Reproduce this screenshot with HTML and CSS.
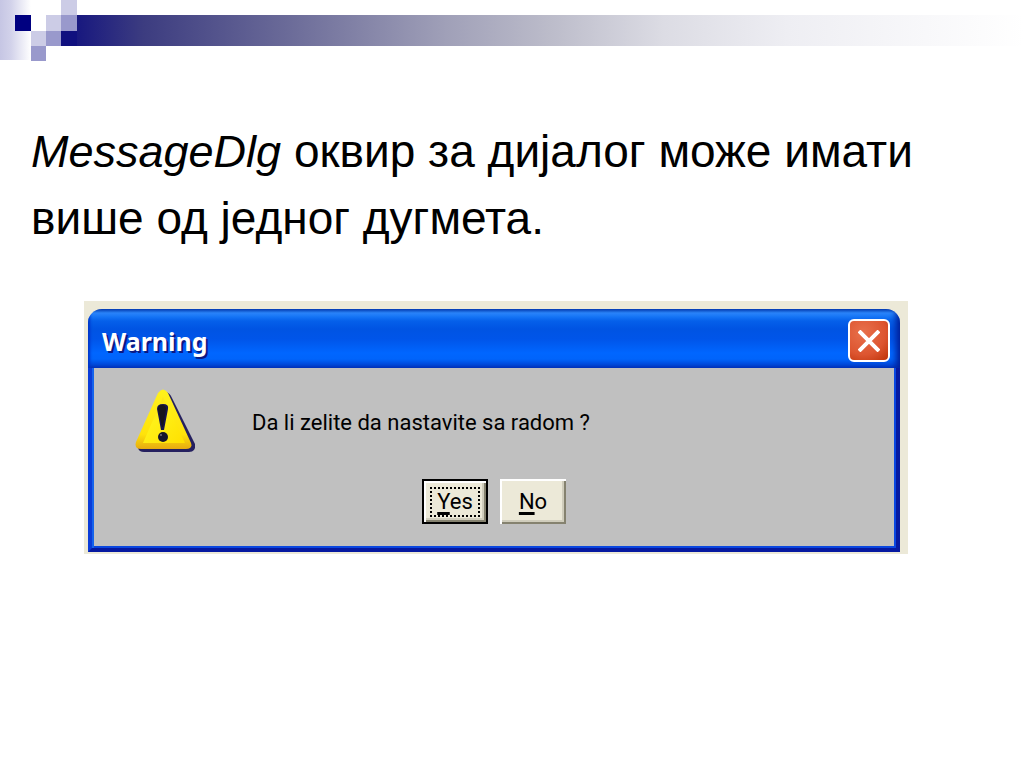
FILE: index.html
```html
<!DOCTYPE html>
<html lang="sr">
<head>
<meta charset="utf-8">
<title>MessageDlg</title>
<link rel="stylesheet" href="styles.css">
</head>
<body>
<header class="banner">
  <svg class="banner-squares" width="77" height="61" viewBox="0 0 77 61" shape-rendering="crispEdges" aria-hidden="true">
    <defs>
      <linearGradient id="fade"><stop offset="0" stop-color="#c6c6e4"/><stop offset=".35" stop-color="#d2d2ea"/><stop offset="1" stop-color="#fff"/></linearGradient>
    </defs>
    <rect width="31" height="60" fill="url(#fade)"/>
    <rect x="15" y="15" width="16" height="16" fill="#000080"/>
    <rect x="61" y="0" width="16" height="15" fill="#cccce6"/>
    <rect x="46" y="15" width="15" height="16" fill="#cccce6"/>
    <rect x="31" y="31" width="15" height="15" fill="#cccce6"/>
    <rect x="61" y="15" width="16" height="16" fill="#9999cc"/>
    <rect x="46" y="31" width="15" height="15" fill="#9999cc"/>
    <rect x="31" y="46" width="15" height="15" fill="#9999cc"/>
    <rect x="61" y="31" width="16" height="15" fill="#10107f"/>
  </svg>
  <div class="banner-bar"></div>
</header>
<main class="slide">
  <p class="lead"><em>MessageDlg</em> <span>оквир за дијалог може имати</span><br><span>више од једног дугмета.</span></p>
  <div class="desktop">
    <section class="window" role="dialog" aria-labelledby="dlg-title">
      <div class="titlebar">
        <h1 class="title" id="dlg-title">Warning</h1>
        <button class="close" type="button" aria-label="Close">
          <svg width="22" height="22" viewBox="0 0 22 22" aria-hidden="true"><path d="M1 1 21 21M21 1 1 21" stroke="#fff" stroke-width="4" fill="none"/></svg>
        </button>
      </div>
      <div class="client">
        <div class="message">
          <svg class="icon" width="64" height="64" viewBox="0 0 64 64" aria-hidden="true">
            <defs>
              <linearGradient id="sign" x1="0" y1="0" x2="0" y2="1"><stop offset="0" stop-color="#fff21c"/><stop offset=".75" stop-color="#ffe30b"/><stop offset="1" stop-color="#e6aa10"/></linearGradient>
              <linearGradient id="face" x1="0" y1="0" x2="1" y2="1"><stop offset="0" stop-color="#f8d020"/><stop offset=".4" stop-color="#fff018"/><stop offset="1" stop-color="#ffe000"/></linearGradient>
            </defs>
            <path d="M31 3Q35 4 37 9L60 55Q61 63 54 63H9Q4 63 3 59Z" fill="#25205f"/>
            <path d="M23 4Q28-3 33 4L56 54Q58 60 51 60H6Q-1 60 1 53Z" fill="url(#sign)"/>
            <path d="M28 8 50 54H8Z" fill="url(#face)"/>
            <path d="M22 20Q22 15 28 15T33 20L29 41H26Z" fill="#17154d"/>
            <path d="M23 20Q23 16 27 16T31 20L28 38H27Z" fill="#17151d"/>
            <circle cx="28" cy="48" r="5" fill="#17152d"/>
            <circle cx="26" cy="46" r="1" fill="#777180"/>
          </svg>
          <p class="text">Da li zelite da nastavite sa radom ?</p>
        </div>
        <div class="actions">
          <button class="btn btn-default" type="button"><span class="focus"><u>Y</u>es</span></button>
          <button class="btn" type="button"><u>N</u>o</button>
        </div>
      </div>
    </section>
  </div>
</main>
</body>
</html>
```
FILE: styles.css
```css
* { box-sizing: border-box; }
body { margin: 0; background: #fff; color: #000; font-family: "Liberation Sans", Arial, sans-serif; }
.banner { display: flex; align-items: flex-start; height: 61px; }
.banner-squares { flex: none; display: block; }
.banner-bar {
  flex: 1; height: 31px; margin-top: 15px;
  background: linear-gradient(90deg, #18187f, #3c3c80 7%, #6a6a98 22%, #a0a0b8 39%, #bcbcca 50%, #dcdce4 62%, #eeeef3 75%, #fff);
}
.slide { padding: 57px 84px 0 31px; }
.lead { margin: 0; font-size: 46px; line-height: 66px; }
.lead em { font-size: 45px; }
.desktop { margin: 50px 32px 0 53px; padding: 8px 8px 2px 4px; background: #ece9d8; }
.window { overflow: hidden; border-radius: 14px 14px 0 0; }
.titlebar {
  display: flex; align-items: center; justify-content: space-between;
  height: 59px; padding: 4px 10px 0 14px;
  background: linear-gradient(180deg, #0747b8 0, #2b86fb 4px, #1473f5 8px, #0560ea 12px, #0054e3 20px, #0055e9 30px, #0066ff 44px, #0064fb 50px, #0048d8 56px, #0037c0 100%);
  box-shadow: inset 3px 0 3px -1px #0034c8, inset -6px 0 6px -2px #00209a;
}
.title { margin: 0; font: bold 25px/32px "Noto Sans", sans-serif; color: #fff; text-shadow: 2px 2px 0 #0a1883; }
.close {
  display: flex; align-items: center; justify-content: center;
  width: 42px; height: 43px; padding: 0;
  border: 2px solid #fff; border-radius: 6px;
  background: radial-gradient(circle at 35% 30%, #e8714c, #dd5530 60%, #bd3208);
}
.client {
  padding: 21px 0 24px;
  border: solid;
  border-width: 0 4px 4px;
  border-color: #0a3cd8 #0619a0 #0619a0 #0a3cd8;
  background: #c0c0c0;
  box-shadow: inset 2px 0 #1563ec, inset -2px -2px #0a47e0;
}
.message { display: flex; align-items: center; gap: 53px; padding-left: 43px; }
.icon { flex: none; display: block; }
.text { margin: 0; padding-top: 4px; font: 22px/28px Roboto, "Noto Sans", sans-serif; }
.actions { display: flex; justify-content: center; gap: 12px; margin-top: 26px; }
.btn {
  display: flex; align-items: center; justify-content: center;
  width: 66px; height: 45px; padding: 0;
  border: 0; background: #ece9d8; color: #000;
  font: 22px/26px Roboto, "Noto Sans", sans-serif;
  box-shadow: inset 2px 2px #fff, inset -2px -2px #85826f, inset -4px -4px #d0cdbc;
}
.btn-default { border: 2px solid #000; }
.focus { width: 50px; border: 2px dotted #000; }
.btn u { text-decoration-thickness: 3px; text-underline-offset: 3px; }
```
